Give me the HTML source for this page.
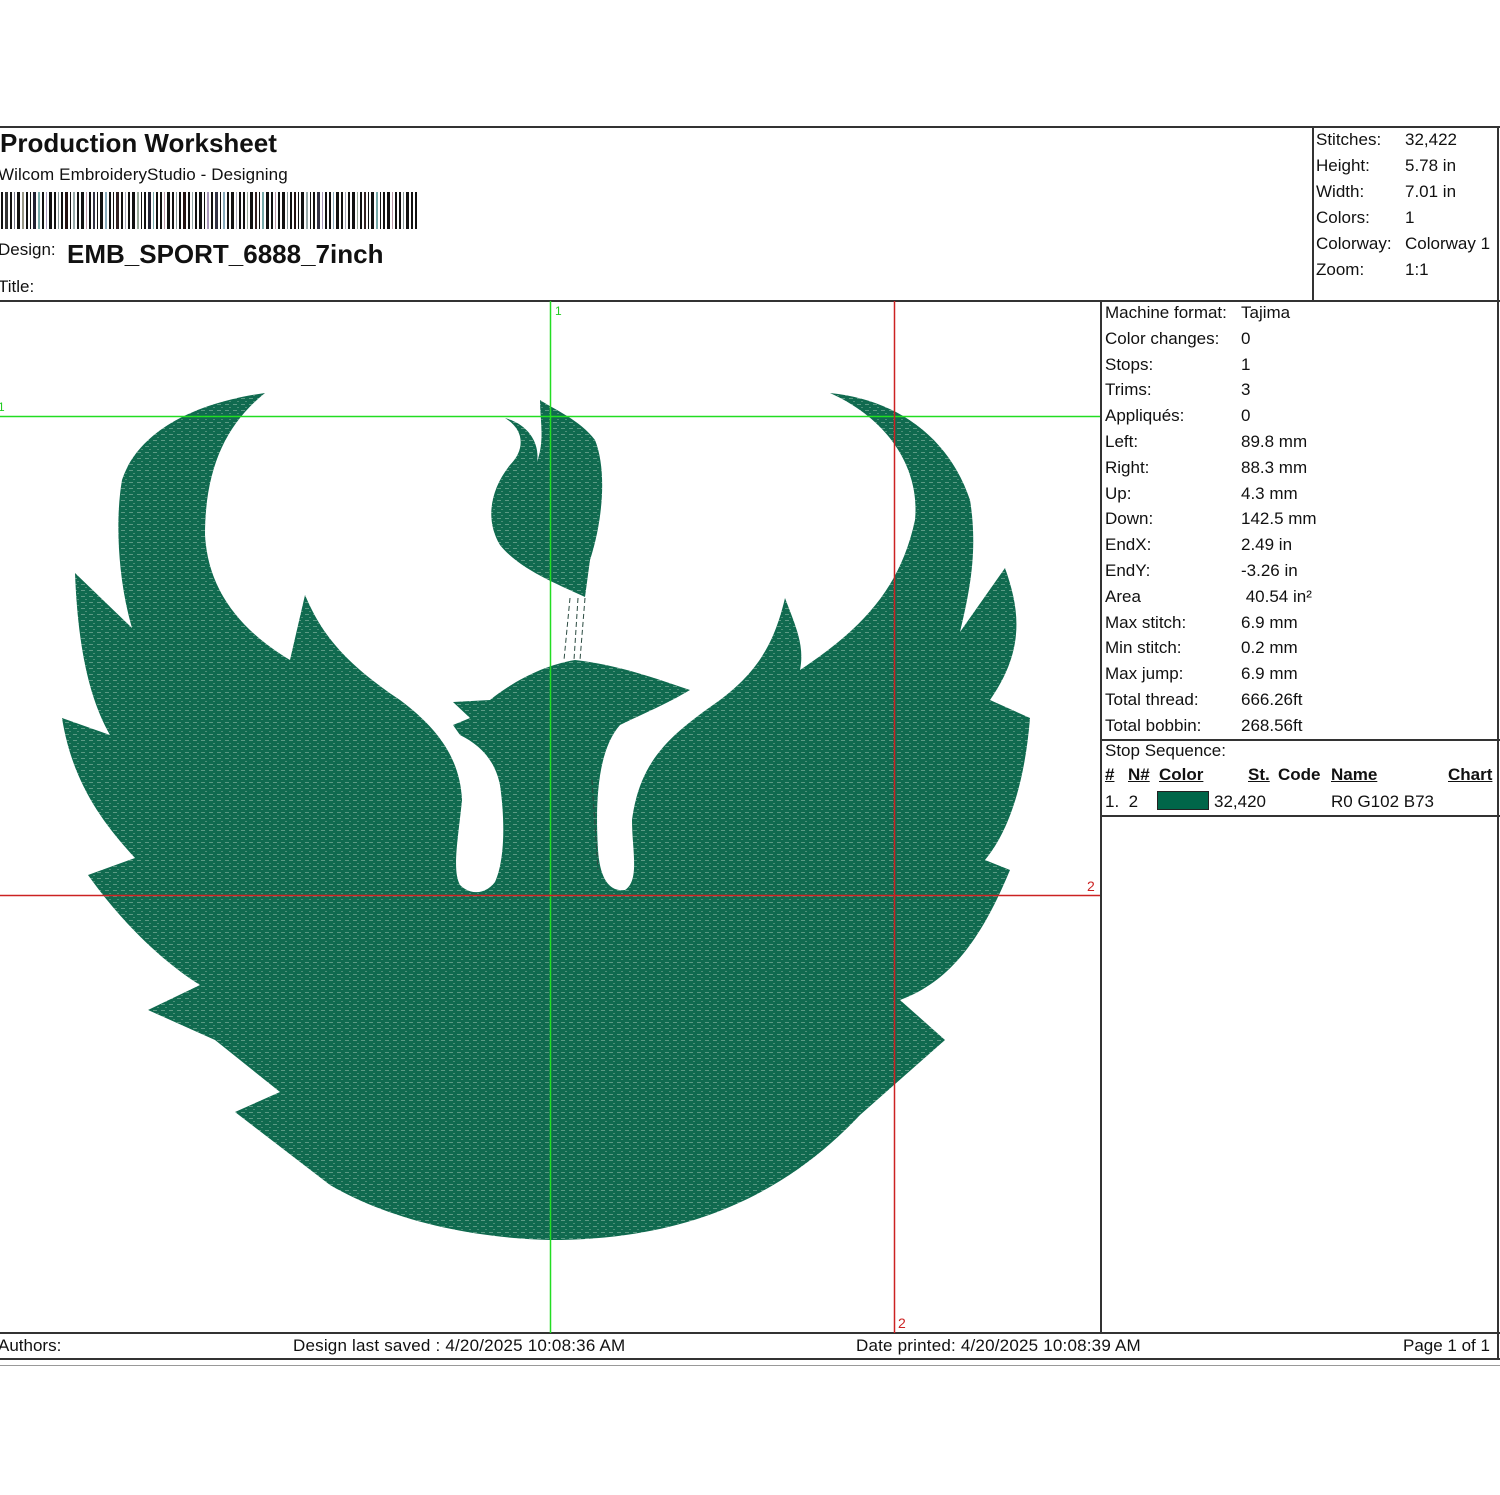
<!DOCTYPE html>
<html><head><meta charset="utf-8"><style>
body{margin:0;width:1500px;height:1495px;background:#fff;position:relative;font-family:"Liberation Sans",Arial,sans-serif;color:#111;overflow:hidden}
.a{position:absolute;white-space:nowrap}
.l{position:absolute;background:#333}
.s{font-size:17px;line-height:26px}
</style></head><body>
<div class="l" style="left:0;top:126px;width:1500px;height:2px"></div>
<div class="l" style="left:0;top:300px;width:1500px;height:2px"></div>
<div class="l" style="left:1312px;top:127px;width:2px;height:174px"></div>
<div class="l" style="left:1497px;top:127px;width:2px;height:1233px"></div>
<div class="l" style="left:1100px;top:301px;width:2px;height:1032px"></div>
<div class="l" style="left:1100px;top:739px;width:400px;height:2px"></div>
<div class="l" style="left:1100px;top:815px;width:400px;height:2px"></div>
<div class="l" style="left:0;top:1332px;width:1500px;height:2px"></div>
<div class="l" style="left:0;top:1358px;width:1500px;height:2px"></div>
<div class="l" style="left:0;top:1365px;width:1500px;height:1px;background:#999"></div>

<div class="a" style="left:0;top:128px;font-size:26px;font-weight:bold">Production Worksheet</div>
<div class="a" style="left:-2px;top:165px;font-size:17px;letter-spacing:0.1px">Wilcom EmbroideryStudio - Designing</div>
<svg class="a" style="left:0;top:192px" width="418" height="37">
<g fill="#111">
<rect x="1" width="2" height="37"/><rect x="5" width="3" height="37" fill="#333"/><rect x="10" width="2" height="37"/><rect x="14" width="1" height="37" fill="#778"/><rect x="17" width="3" height="37"/><rect x="22" width="2" height="37" fill="#998"/><rect x="26" width="2" height="37"/><rect x="30" width="1" height="37"/><rect x="33" width="3" height="37" fill="#223"/><rect x="38" width="2" height="37" fill="#7aa"/><rect x="42" width="2" height="37"/><rect x="46" width="1" height="37" fill="#a9b"/><rect x="49" width="3" height="37"/><rect x="54" width="2" height="37"/><rect x="58" width="1" height="37" fill="#899"/><rect x="61" width="2" height="37"/><rect x="65" width="3" height="37" fill="#211"/><rect x="70" width="1" height="37"/><rect x="73" width="2" height="37" fill="#9aa"/><rect x="77" width="2" height="37"/><rect x="81" width="3" height="37"/><rect x="86" width="1" height="37" fill="#b9a"/><rect x="89" width="2" height="37"/><rect x="93" width="2" height="37" fill="#334"/><rect x="97" width="1" height="37"/><rect x="100" width="3" height="37"/><rect x="105" width="2" height="37" fill="#8ab"/><rect x="109" width="2" height="37"/><rect x="113" width="1" height="37"/><rect x="116" width="3" height="37" fill="#322"/><rect x="121" width="2" height="37"/><rect x="125" width="1" height="37" fill="#aab"/><rect x="128" width="2" height="37"/><rect x="132" width="3" height="37"/><rect x="137" width="2" height="37" fill="#9a9"/><rect x="141" width="1" height="37"/><rect x="144" width="2" height="37"/><rect x="148" width="3" height="37" fill="#223"/><rect x="153" width="1" height="37" fill="#7aa"/><rect x="156" width="2" height="37"/><rect x="160" width="2" height="37"/><rect x="164" width="1" height="37" fill="#b9a"/><rect x="167" width="3" height="37"/><rect x="172" width="2" height="37"/><rect x="176" width="1" height="37" fill="#899"/><rect x="179" width="2" height="37"/><rect x="183" width="3" height="37" fill="#211"/><rect x="188" width="2" height="37"/><rect x="192" width="1" height="37" fill="#9aa"/><rect x="195" width="2" height="37"/><rect x="199" width="3" height="37"/><rect x="204" width="1" height="37"/><rect x="207" width="2" height="37" fill="#a9b"/><rect x="211" width="2" height="37"/><rect x="215" width="3" height="37" fill="#334"/><rect x="220" width="1" height="37"/><rect x="223" width="2" height="37" fill="#8ab"/><rect x="227" width="2" height="37"/><rect x="231" width="3" height="37"/><rect x="236" width="1" height="37" fill="#aab"/><rect x="239" width="2" height="37"/><rect x="243" width="2" height="37"/><rect x="247" width="1" height="37" fill="#9a9"/><rect x="250" width="3" height="37"/><rect x="255" width="2" height="37" fill="#322"/><rect x="259" width="1" height="37"/><rect x="262" width="2" height="37" fill="#7aa"/><rect x="266" width="3" height="37"/><rect x="271" width="2" height="37"/><rect x="275" width="1" height="37" fill="#b9a"/><rect x="278" width="2" height="37"/><rect x="282" width="3" height="37"/><rect x="287" width="1" height="37" fill="#899"/><rect x="290" width="2" height="37"/><rect x="294" width="2" height="37" fill="#211"/><rect x="298" width="1" height="37"/><rect x="301" width="3" height="37"/><rect x="306" width="2" height="37" fill="#9aa"/><rect x="310" width="1" height="37"/><rect x="313" width="2" height="37"/><rect x="317" width="3" height="37" fill="#334"/><rect x="322" width="1" height="37" fill="#a9b"/><rect x="325" width="2" height="37"/><rect x="329" width="2" height="37"/><rect x="333" width="1" height="37" fill="#8ab"/><rect x="336" width="3" height="37"/><rect x="341" width="2" height="37"/><rect x="345" width="1" height="37" fill="#aab"/><rect x="348" width="2" height="37"/><rect x="352" width="3" height="37"/><rect x="357" width="1" height="37" fill="#9a9"/><rect x="360" width="2" height="37"/><rect x="364" width="2" height="37" fill="#322"/><rect x="368" width="1" height="37"/><rect x="371" width="3" height="37"/><rect x="376" width="2" height="37" fill="#7aa"/><rect x="380" width="1" height="37"/><rect x="383" width="2" height="37"/><rect x="387" width="3" height="37"/><rect x="392" width="1" height="37" fill="#b9a"/><rect x="395" width="2" height="37"/><rect x="399" width="2" height="37"/><rect x="403" width="1" height="37" fill="#899"/><rect x="406" width="3" height="37"/><rect x="411" width="2" height="37"/><rect x="415" width="2" height="37"/>
</g></svg>
<div class="a" style="left:-2px;top:240px;font-size:17px">Design:</div>
<div class="a" style="left:67px;top:239px;font-size:26px;font-weight:bold">EMB_SPORT_6888_7inch</div>
<div class="a" style="left:-2px;top:277px;font-size:17px">Title:</div>

<div class="a s" style="left:1316px;top:127px">Stitches:<br>Height:<br>Width:<br>Colors:<br>Colorway:<br>Zoom:</div>
<div class="a s" style="left:1405px;top:127px">32,422<br>5.78 in<br>7.01 in<br>1<br>Colorway 1<br>1:1</div>

<div class="a s" style="left:1105px;top:300px;line-height:25.8px">Machine format:<br>Color changes:<br>Stops:<br>Trims:<br>Appliqués:<br>Left:<br>Right:<br>Up:<br>Down:<br>EndX:<br>EndY:<br>Area<br>Max stitch:<br>Min stitch:<br>Max jump:<br>Total thread:<br>Total bobbin:</div>
<div class="a s" style="left:1241px;top:300px;line-height:25.8px">Tajima<br>0<br>1<br>3<br>0<br>89.8 mm<br>88.3 mm<br>4.3 mm<br>142.5 mm<br>2.49 in<br>-3.26 in<br>&nbsp;40.54 in²<br>6.9 mm<br>0.2 mm<br>6.9 mm<br>666.26ft<br>268.56ft</div>

<div class="a s" style="left:1105px;top:738px">Stop Sequence:</div>
<div class="a" style="left:1105px;top:765px;font-size:17px;font-weight:bold;text-decoration:underline">#</div>
<div class="a" style="left:1128px;top:765px;font-size:17px;font-weight:bold;text-decoration:underline">N#</div>
<div class="a" style="left:1159px;top:765px;font-size:17px;font-weight:bold;text-decoration:underline">Color</div>
<div class="a" style="left:1248px;top:765px;font-size:17px;font-weight:bold;text-decoration:underline">St.</div>
<div class="a" style="left:1278px;top:765px;font-size:17px;font-weight:bold">Code</div>
<div class="a" style="left:1331px;top:765px;font-size:17px;font-weight:bold;text-decoration:underline">Name</div>
<div class="a" style="left:1448px;top:765px;font-size:17px;font-weight:bold;text-decoration:underline">Chart</div>
<div class="a" style="left:1105px;top:792px;font-size:17px">1.&nbsp; 2</div>
<div class="a" style="left:1157px;top:791px;width:50px;height:17px;background:#006649;border:1px solid #222"></div>
<div class="a" style="left:1214px;top:792px;font-size:17px">32,420</div>
<div class="a" style="left:1331px;top:792px;font-size:17px">R0 G102 B73</div>

<div class="a" style="left:-2px;top:1336px;font-size:17px">Authors:</div>
<div class="a" style="left:293px;top:1336px;font-size:17px;letter-spacing:0.2px">Design last saved : 4/20/2025 10:08:36 AM</div>
<div class="a" style="left:856px;top:1336px;font-size:17px;letter-spacing:0.2px">Date printed: 4/20/2025 10:08:39 AM</div>
<div class="a" style="left:1403px;top:1336px;font-size:17px">Page 1 of 1</div>

<svg class="a" style="left:0;top:0" width="1100" height="1333">
<defs><pattern id="p" width="8" height="6" patternUnits="userSpaceOnUse"><rect width="8" height="6" fill="#106a4f"/><rect x="1" y="2" width="4" height="1" fill="#5c9a84"/><rect x="5" y="5" width="2" height="1" fill="#4c8f78"/></pattern></defs>
<g fill="url(#p)">
<path d="M550,1240 C470,1238 390,1220 330,1185 L235,1112 L280,1092 L215,1040 L148,1010 L200,985 C160,960 120,920 88,875 L135,858 C100,820 72,780 62,718 L110,735 C90,700 78,650 75,573 L132,628 C118,580 115,520 122,480 C135,440 180,405 265,393 C225,425 205,470 205,535 C208,590 240,630 290,660 L305,595 C320,630 340,660 400,700 C440,730 460,760 462,800 C458,840 452,870 460,885 C470,895 485,895 495,882 C505,860 505,820 500,785 C495,760 480,745 460,735 L453,725 L470,718 L453,702 L490,700 C515,680 545,665 575,660 C620,665 660,680 690,690 C665,705 640,715 620,725 C598,750 595,800 598,850 C600,880 610,892 625,890 C640,880 632,850 632,820 C640,760 670,735 720,700 C760,670 775,640 785,598 C795,625 805,645 800,670 C860,630 900,590 915,520 C920,470 890,420 830,393 C900,400 950,440 970,500 C978,550 970,590 960,632 L1005,568 C1020,610 1025,650 990,700 L1030,718 C1025,780 1010,830 985,860 L1010,870 C985,930 955,980 900,1000 L945,1040 L860,1115 L860,1115 C780,1200 680,1240 550,1240 Z"/>
<path d="M540,400 C555,410 580,420 595,440 C607,470 603,520 590,560 L585,597 C560,585 520,570 500,545 C485,520 490,490 510,465 C525,450 525,430 505,418 C530,425 540,445 537,462 C545,440 540,420 540,400 Z"/>
</g>
<g stroke="#2a4a40" stroke-dasharray="5,3" fill="none" stroke-width="1"><path d="M570,598 L564,660 M578,598 L574,660 M585,598 L580,660 M592,780 L598,870"/></g>
<line x1="550.5" y1="301" x2="550.5" y2="1333" stroke="#22dd22" stroke-width="1.5"/>
<line x1="0" y1="416.5" x2="1100" y2="416.5" stroke="#22dd22" stroke-width="1.5"/>
<line x1="894.5" y1="301" x2="894.5" y2="1333" stroke="#cc2222" stroke-width="1.5"/>
<line x1="0" y1="895.5" x2="1100" y2="895.5" stroke="#cc2222" stroke-width="1.5"/>
<text x="555" y="315" font-size="12" fill="#22cc22" font-family="Liberation Sans">1</text>
<text x="-2" y="411" font-size="12" fill="#22cc22" font-family="Liberation Sans">1</text>
<text x="1087" y="891" font-size="14" fill="#cc2222" font-family="Liberation Sans">2</text>
<text x="898" y="1328" font-size="14" fill="#cc2222" font-family="Liberation Sans">2</text>
</svg>
</body></html>
